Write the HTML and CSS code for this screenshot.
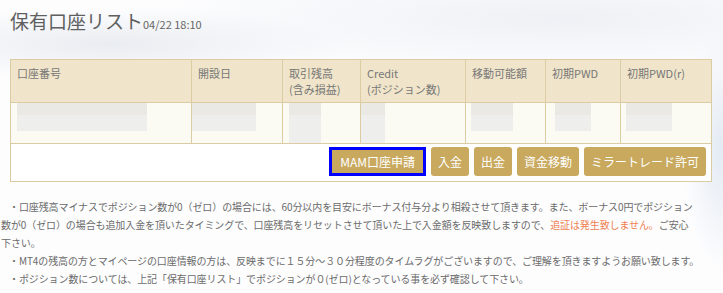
FILE: index.html
```html
<!DOCTYPE html>
<html lang="ja">
<head>
  <meta charset="UTF-8" />
  <title>保有口座リスト</title>
  <link rel="stylesheet" href="styles.css">
</head>
<body>

  <div class="page">
    <h1>保有口座リスト<span class="time">04/22 18:10</span></h1>

    <table class="accounts">
      <colgroup>
        <col class="c1"><col class="c2"><col class="c3"><col class="c4"><col class="c5"><col class="c6"><col class="c7">
      </colgroup>
      <tr>
        <th>口座番号</th>
        <th>開設日</th>
        <th>取引残高<br>(含み損益)</th>
        <th>Credit<br>(ポジション数)</th>
        <th>移動可能額</th>
        <th>初期PWD</th>
        <th>初期PWD(r)</th>
      </tr>
      <tr class="data">
        <td><span class="mask m1"></span></td>
        <td><span class="mask m2"></span></td>
        <td><span class="mask m3"></span></td>
        <td><span class="mask m4"></span></td>
        <td><span class="mask m5"></span></td>
        <td><span class="mask m6"></span></td>
        <td><span class="mask m7"></span></td>
      </tr>
      <tr>
        <td colspan="7" class="actions">
          <div class="btns">
            <button class="btn focus">MAM口座申請</button>
            <button class="btn">入金</button>
            <button class="btn">出金</button>
            <button class="btn">資金移動</button>
            <button class="btn">ミラートレード許可</button>
          </div>
        </td>
      </tr>
    </table>
  </div>

  <div class="notes">
    <p>・口座残高マイナスでポジション数が0（ゼロ）の場合には、60分以内を目安にボーナス付与分より相殺させて頂きます。また、ボーナス0円でポジション数が0（ゼロ）の場合も追加入金を頂いたタイミングで、口座残高をリセットさせて頂いた上で入金額を反映致しますので、<span class="warn">追証は発生致しません。</span>ご安心<span class="nw">下さい。</span></p>
    <p>・MT4の残高の方とマイページの口座情報の方は、反映までに１５分～３０分程度のタイムラグがございますので、ご理解を頂きますようお願い致します。</p>
    <p>・ポジション数については、上記「保有口座リスト」でポジションが０(ゼロ)となっている事を必ず確認して下さい。</p>
  </div>

</body>
</html>
```

FILE: styles.css
```css
body {
  margin: 0;
  font-family: "Noto Sans CJK JP", "Noto Sans", sans-serif;
  color: #666;
  background:
    radial-gradient(ellipse 240px 36px at 110px 44px, #e9ecf1, rgba(233,236,241,0)),
    radial-gradient(ellipse 420px 60px at 560px 18px, #eef1f5, rgba(238,241,245,0)),
    radial-gradient(ellipse 40px 120px at 723px 150px, #e3eaf3, rgba(227,234,243,0)),
    #fdfdfe;
  min-height: 293px;
}

.page {
  padding: 9px 10px 0 10px;
}

h1 {
  margin: 0 0 23px 0;
  font-size: 19px;
  line-height: 24px;
  font-weight: normal;
  color: #5f5f5f;
}

.time {
  font-size: 11px;
  color: #666;
}

.accounts {
  width: 701px;
  table-layout: fixed;
  border-collapse: collapse;
  font-size: 11px;
}

.c1 { width: 181px; }
.c2 { width: 91px; }
.c3 { width: 78px; }
.c4 { width: 105px; }
.c5 { width: 80px; }
.c6 { width: 75px; }
.c7 { width: 91px; }

.accounts th,
.accounts td {
  border: 1px solid #dccca4;
}

.accounts th {
  height: 31px;
  padding: 5px 6px;
  background: #f0e5ca;
  text-align: left;
  vertical-align: top;
  font-weight: normal;
  line-height: 16px;
  color: #777;
}

.data td {
  height: 40px;
  padding: 0;
  background: #fbfaf3;
  vertical-align: top;
}

.mask {
  display: block;
  height: 28px;
  background: linear-gradient(#ebe9e3 0 12px, #eeeeec 12px 28px);
}

.m1 { width: 130px; margin-left: 6px; }
.m2 { width: 64px; }
.m3 { width: 32px; height: 40px; margin-left: 6px; }
.m4 { width: 24px; height: 40px; }
.m5 { width: 42px; margin-left: 5px; }
.m6 { width: 36px; margin-left: 9px; }
.m7 { width: 46px; margin-left: 5px; }

.actions {
  height: 29px;
  padding: 3px 5px 5px 5px;
  background: #fff;
}

.btns {
  display: flex;
  justify-content: flex-end;
  gap: 5px;
}

.btn {
  height: 29px;
  box-sizing: border-box;
  padding: 0 7px;
  border: none;
  border-radius: 3px;
  background: #c8a95e;
  color: #fff;
  font-family: "Noto Sans CJK JP", sans-serif;
  font-size: 12px;
  cursor: pointer;
}

.btn.focus {
  border: 3px solid #0000ff;
  border-radius: 0;
  padding: 0 8px;
}

.notes {
  margin-top: 16px;
  width: 701px;
  padding-left: 1px;
  font-size: 10px;
  line-height: 18px;
  letter-spacing: -0.1px;
  color: #6b6b6b;
}

.notes p {
  margin: 0;
  text-indent: 8px;
}

.nw { white-space: nowrap; }

.warn { color: #ee8050; }
```
